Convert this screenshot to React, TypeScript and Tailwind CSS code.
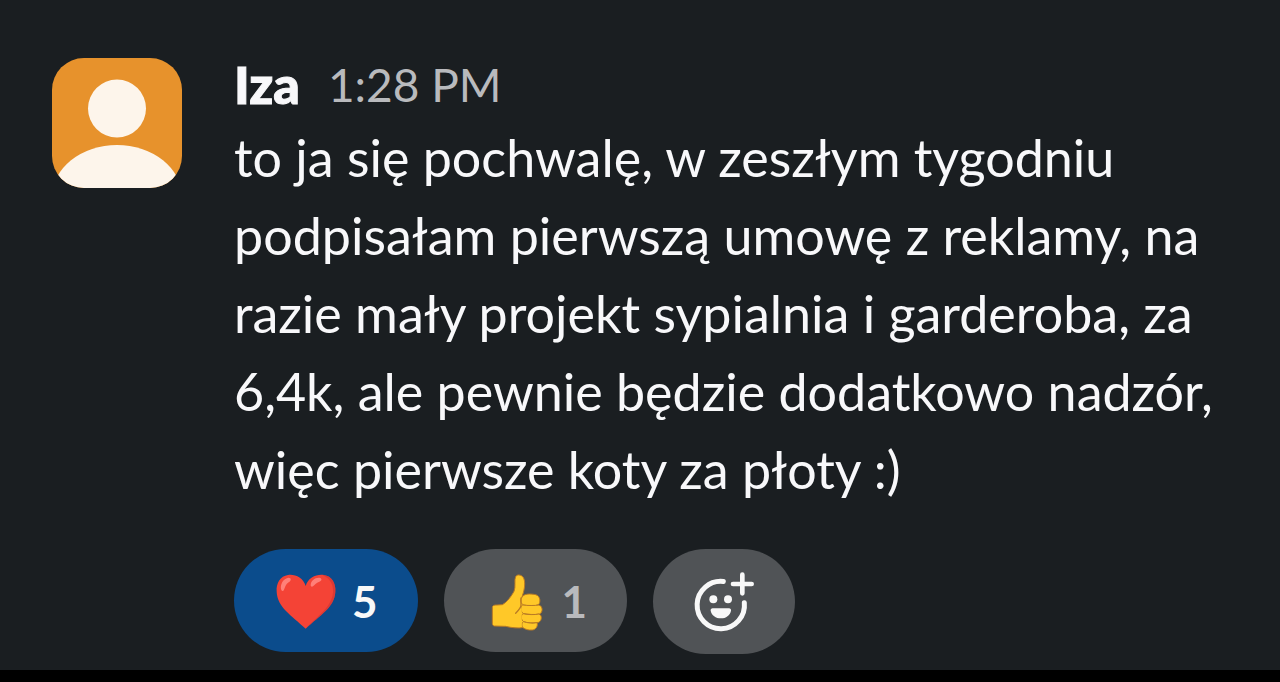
import React, { useState } from 'react';
import clsx from 'clsx';

const Avatar: React.FC = () => (
  <svg
    viewBox="0 0 130 130"
    role="img"
    aria-label="Iza"
    className="mt-2 size-[130px] shrink-0 rounded-[32px] bg-[#e7922c]"
  >
    <circle cx="65" cy="50.5" r="29" fill="#fdf5eb" />
    <ellipse cx="65" cy="139" rx="65" ry="52" fill="#fdf5eb" />
  </svg>
);

const HeartIcon: React.FC = () => (
  <svg viewBox="144 90 186 186" className="size-[62px]" aria-hidden="true">
    <path
      d="M239 138C231 112 207 102 186 105C163 108 150 130 152 155C154 202 196 225 239 266C282 225 326 202 328 155C330 130 317 108 294 105C271 102 247 112 239 138Z"
      fill="#f44336"
    />
    <path
      d="M294 105C317 108 330 130 328 155C326 202 282 225 239 266C278 224 316 202 321 158C323 134 311 114 290 106Z"
      fill="#c33"
      opacity="0.6"
    />
    <path d="M166 150C161 136 170 116 187 113C197 113 196 122 188 127C179 132 178 140 174 149C172 154 168 154 166 150Z" fill="#ff8078" />
    <path d="M254 136C254 122 267 112 280 113C289 115 288 122 280 125C270 129 266 134 261 139C258 142 254 140 254 136Z" fill="#ff8078" />
  </svg>
);

const ThumbIcon: React.FC = () => (
  <svg viewBox="141 90 186 186" className="size-[62px]" aria-hidden="true">
    <g fill="#ffc828" stroke="#b97a24" strokeWidth="3" strokeLinejoin="round">
      <path d="M166 203C166 196 171 195 180 195L196 194C210 187 224 167 231 154C237 141 231 119 236 110C240 102 252 104 258 111C265 121 264 140 259 158L254 174L262 196V262C245 266 223 263 206 259L172 258C166 257 166 252 166 246Z" />
      <path d="M255 172C260 160 282 161 296 164C310 167 312 188 304 194C293 200 271 197 260 195C250 191 249 177 255 172Z" />
      <path d="M257 195C272 197 293 197 306 195C318 199 318 217 308 222C294 225 271 223 260 221C249 214 249 199 257 195Z" />
      <path d="M258 221C273 224 292 225 306 222C316 226 315 242 305 247C292 250 271 249 260 245C251 239 251 225 258 221Z" />
      <path d="M259 245C271 249 288 251 300 248C304 257 297 269 286 270C275 271 265 268 259 264C253 258 254 249 259 245Z" />
    </g>
    <path d="M244 198L254 206V260H248L242 218Z" fill="#ffc828" />
    <path d="M252 174V196C252 204 245 211 236 220" fill="none" stroke="#b97a24" strokeWidth="4" strokeLinecap="round" />
  </svg>
);

const AddReactionIcon: React.FC = () => (
  <svg viewBox="142 92 186 186" className="size-[62px]" aria-hidden="true">
    <g fill="none" stroke="#f8f8f8" strokeLinecap="round">
      <path d="M233 123.5A71 71 0 1 0 296 187" strokeWidth="15" />
      <path d="M262 131H318M290 103V159" strokeWidth="14" />
    </g>
    <circle cx="203" cy="177" r="12" fill="#f8f8f8" />
    <circle cx="247" cy="177" r="12" fill="#f8f8f8" />
    <path d="M201 204H250C254 204 257 207 256 211C253 225 241 234 226 234C210 234 198 225 195 211C194 207 197 204 201 204Z" fill="#f8f8f8" />
  </svg>
);

interface ReactionProps {
  label: string;
  count: number;
  icon: React.ReactNode;
  initialActive?: boolean;
}

const Reaction: React.FC<ReactionProps> = ({ label, count, icon, initialActive = false }) => {
  const [active, setActive] = useState(initialActive);
  const total = count + Number(active) - Number(initialActive);

  return (
    <button
      type="button"
      aria-label={`${label} ${total}`}
      aria-pressed={active}
      onClick={() => setActive(!active)}
      className={clsx(
        'flex h-[103px] items-center gap-4 rounded-full px-10 text-[44px] leading-[52px] font-bold',
        active ? 'bg-[#0b4c8c] text-[#f8f8f8]' : 'bg-[#505356] text-[#b9babd]'
      )}
    >
      {icon}
      <span>{total}</span>
    </button>
  );
};

export default function App() {
  return (
    <div className="flex min-h-screen flex-col bg-black pb-3 font-['Lato',sans-serif]">
      <main className="flex-1 bg-[#1a1e21] px-[52px] pt-[50px] pb-4">
        <article className="flex gap-[52px]">
          <Avatar />

          <div className="min-w-0 flex-1">
            <header className="flex h-[68px] items-center gap-7">
              <h2 className="text-[52px] font-black text-[#f8f8fa] [-webkit-text-stroke:1px_#f8f8fa]">Iza</h2>
              <time className="text-[46px] text-[#b9babd]">1:28 PM</time>
            </header>

            <p className="text-[52px] leading-[78px] text-[#f8f8fa]">
              to ja się pochwalę, w zeszłym tygodniu podpisałam pierwszą umowę z reklamy, na razie mały
              projekt sypialnia i garderoba, za 6,4k, ale pewnie będzie dodatkowo nadzór, więc pierwsze
              koty za płoty :)
            </p>

            <div className="mt-[41px] flex flex-wrap items-start gap-[26px]">
              <Reaction label="Heart" count={5} icon={<HeartIcon />} initialActive />
              <Reaction label="Thumbs up" count={1} icon={<ThumbIcon />} />
              <button
                type="button"
                aria-label="Add reaction"
                className="flex h-[105px] items-center rounded-full bg-[#505356] px-10"
              >
                <AddReactionIcon />
              </button>
            </div>
          </div>
        </article>
      </main>
    </div>
  );
}
